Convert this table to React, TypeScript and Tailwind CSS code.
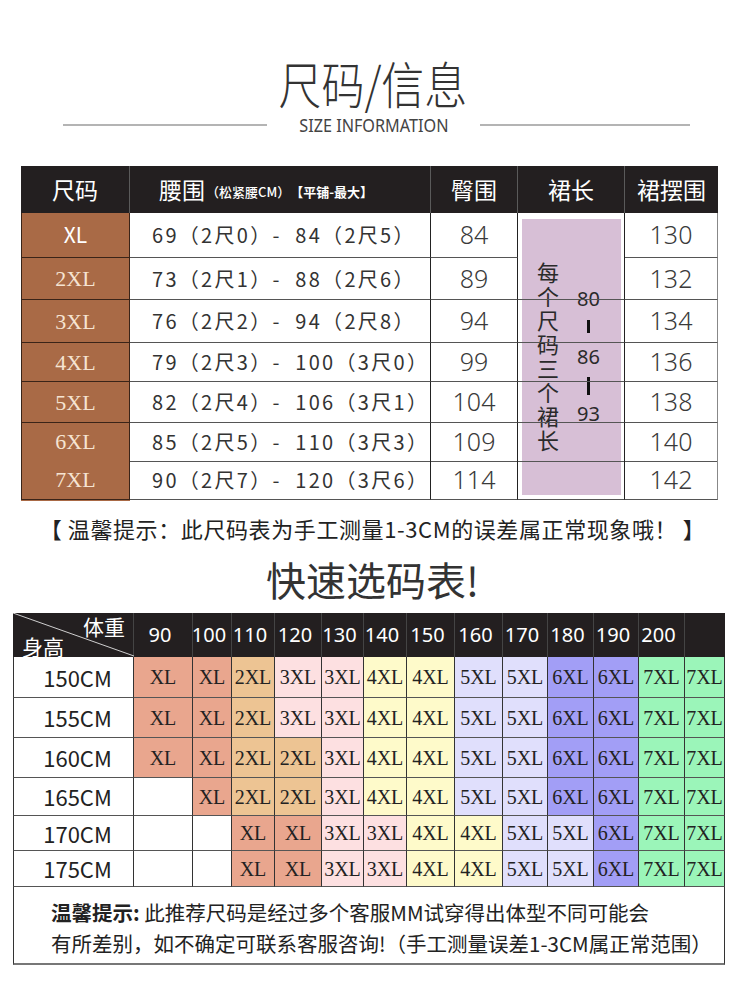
import React from "react";

const cjk = "font-['Noto_Sans_CJK_SC','Noto_Sans',sans-serif]";
const serif = "font-['Liberation_Serif','DejaVu_Serif',serif]";
const latin = "font-['Noto_Sans','Noto_Sans_CJK_SC',sans-serif]";

const t1 = [
  { size: "XL", w: "69（2尺0）-  84（2尺5）", hip: "84", hem: "130", h: "h-[45px]" },
  { size: "2XL", w: "73（2尺1）-  88（2尺6）", hip: "89", hem: "132", h: "h-[42px]" },
  { size: "3XL", w: "76（2尺2）-  94（2尺8）", hip: "94", hem: "134", h: "h-[43px]" },
  { size: "4XL", w: "79（2尺3）-  100（3尺0）", hip: "99", hem: "136", h: "h-[39px]" },
  { size: "5XL", w: "82（2尺4）-  106（3尺1）", hip: "104", hem: "138", h: "h-[41px]" },
  { size: "6XL", w: "85（2尺5）-  110（3尺3）", hip: "109", hem: "140", h: "h-[38px]" },
  { size: "7XL", w: "90（2尺7）-  120（3尺6）", hip: "114", hem: "142", h: "h-[37px]" },
];

const sizeBg: Record<string, string> = {
  XL: "bg-[#e9a68e]",
  "2XL": "bg-[#edc493]",
  "3XL": "bg-[#fde0e1]",
  "4XL": "bg-[#fefaca]",
  "5XL": "bg-[#e0dffc]",
  "6XL": "bg-[#a29ef6]",
  "7XL": "bg-[#9bf5b9]",
  "": "bg-white",
};

const weights = ["90", "100", "110", "120", "130", "140", "150", "160", "170", "180", "190", "200", ""];

const t2 = [
  { h: "150CM", cls: "h-[41px]", cells: ["XL", "XL", "2XL", "3XL", "3XL", "4XL", "4XL", "5XL", "5XL", "6XL", "6XL", "7XL", "7XL"] },
  { h: "155CM", cls: "h-[40px]", cells: ["XL", "XL", "2XL", "3XL", "3XL", "4XL", "4XL", "5XL", "5XL", "6XL", "6XL", "7XL", "7XL"] },
  { h: "160CM", cls: "h-[40px]", cells: ["XL", "XL", "2XL", "2XL", "3XL", "4XL", "4XL", "5XL", "5XL", "6XL", "6XL", "7XL", "7XL"] },
  { h: "165CM", cls: "h-[38px]", cells: ["", "XL", "2XL", "2XL", "3XL", "4XL", "4XL", "5XL", "5XL", "6XL", "6XL", "7XL", "7XL"] },
  { h: "170CM", cls: "h-[35px]", cells: ["", "", "XL", "XL", "3XL", "3XL", "4XL", "4XL", "5XL", "5XL", "6XL", "7XL", "7XL"] },
  { h: "175CM", cls: "h-[36px]", cells: ["", "", "XL", "XL", "3XL", "3XL", "4XL", "4XL", "5XL", "5XL", "6XL", "7XL", "7XL"] },
];

const grid1 = "grid grid-cols-[109px_301px_87px_107px_93px]";
const grid2 = "grid grid-cols-[121px_59px_39px_43px_47px_42px_43px_48px_48px_45px_46px_45px_46px_40px]";

function SizeTable() {
  return (
    <div className="ml-[21px] w-[697px] mt-[31px]">
      <div className={`${grid1} h-[47px] bg-[#231f20] text-white ${cjk}`}>
        <div className="flex items-center justify-center text-[23px] border-r border-[#5a5a5a]">尺码</div>
        <div className="flex items-center pl-[29px] border-r border-[#5a5a5a]">
          <span className="text-[23px]">腰围</span>
          <span className="text-[13px] font-medium ml-[1px] mt-[5px]">（松紧腰CM）</span>
          <span className="text-[13px] font-bold mt-[5px]">【平铺-最大】</span>
        </div>
        <div className="flex items-center justify-center text-[23px] border-r border-[#5a5a5a]">臀围</div>
        <div className="flex items-center justify-center text-[23px] border-r border-[#5a5a5a]">裙长</div>
        <div className="flex items-center justify-center text-[23px]">裙摆围</div>
      </div>
      <div className="relative">
        <div className={`absolute left-[501px] top-[6px] w-[99px] h-[276px] bg-[#d7bfd6] text-[#2a2a2a] ${cjk}`}>
          <div className="absolute left-[15px] top-[40px] w-[22px] flex flex-col text-[22px] leading-[24px]">
            {"每个尺码三个裙长".split("").map((c, i) => (
              <span key={i} className="h-[24px]">{c}</span>
            ))}
          </div>
          <div className={`absolute left-[55px] top-[70px] text-[20px] leading-[20px] ${latin}`}>80</div>
          <div className="absolute left-[65px] top-[101px] w-[3px] h-[13px] bg-[#111]" />
          <div className={`absolute left-[55px] top-[128px] text-[20px] leading-[20px] ${latin}`}>86</div>
          <div className="absolute left-[65px] top-[158px] w-[3px] h-[18px] bg-[#111]" />
          <div className={`absolute left-[55px] top-[185px] text-[20px] leading-[20px] ${latin}`}>93</div>
        </div>
        {t1.map((r, i) => (
          <div key={i} className={`relative ${grid1} ${r.h}`}>
            <div className="flex items-center justify-center bg-[#a96a46] border-l border-r border-b border-[#3a2418]">
              {i === 0 ? (
                <span className={`${cjk} text-[21px] text-white`}>XL</span>
              ) : (
                <span className={`${serif} text-[22px] text-[#f6e4d2]`}>{r.size}</span>
              )}
            </div>
            <div className={`flex items-center pl-[22px] whitespace-pre tracking-[2.3px] border-r border-b border-r-[#222] border-b-[#555] text-[20px] text-[#333] ${cjk}`}>
              {r.w}
            </div>
            <div className={`flex items-center justify-center border-r border-b border-r-[#222] border-b-[#555] text-[25px] font-light text-[#3a3a3a] ${latin}`}>
              {r.hip}
            </div>
            <div className={i === 0 ? "border-r border-[#222]" : "border-r border-b border-r-[#222] border-b-[#555]"} />
            <div className={`flex items-center justify-center border-r border-b border-r-[#888] border-b-[#555] text-[25px] font-light text-[#3a3a3a] ${latin}`}>
              {r.hem}
            </div>
          </div>
        ))}
      </div>
      <div className="w-[109px] h-[3px] bg-[#a96a46]" />
    </div>
  );
}

function QuickTable() {
  return (
    <div className="ml-[13px] w-[712px] mt-[9px]">
      <div className={`${grid2} h-[44px] bg-[#231f20] text-white`}>
        <div className="relative border-r border-[#444]">
          <svg className="absolute inset-0" width="121" height="44" viewBox="0 0 121 44">
            <line x1="0" y1="0" x2="121" y2="43" stroke="#cfcfcf" strokeWidth="1" />
          </svg>
          <span className={`absolute left-[70px] top-[1px] text-[21px] leading-[24px] ${cjk}`}>体重</span>
          <span className={`absolute left-[9px] top-[21px] text-[21px] leading-[24px] ${cjk}`}>身高</span>
        </div>
        {weights.map((w, i) => (
          <div
            key={i}
            className={`flex items-center justify-center pr-[6px] text-[20px] ${latin} ${i === weights.length - 1 ? "" : "border-r border-[#444]"}`}
          >
            {w}
          </div>
        ))}
      </div>
      {t2.map((r, ri) => (
        <div key={ri} className={`${grid2} ${r.cls}`}>
          <div className={`flex items-center justify-center pl-[8px] bg-white border-l border-r border-b border-l-[#333] border-r-[#333] border-b-[#555] text-[22px] text-[#222] ${cjk}`}>
            {r.h}
          </div>
          {r.cells.map((c, ci) => (
            <div
              key={ci}
              className={`flex items-center justify-center border-r border-b border-r-[#333] border-b-[#555] ${sizeBg[c]} ${serif} text-[20px] text-[#222]`}
            >
              {c}
            </div>
          ))}
        </div>
      ))}
      <div className={`h-[78px] pt-[10px] pl-[37px] border-l border-r border-b-2 border-l-[#333] border-r-[#333] border-b-[#777] text-[20.5px] leading-[31px] text-[#222] ${cjk}`}>
        <div>
          <span className="font-bold">温馨提示:</span> 此推荐尺码是经过多个客服MM试穿得出体型不同可能会
        </div>
        <div>有所差别，如不确定可联系客服咨询!（手工测量误差1-3CM属正常范围）</div>
      </div>
    </div>
  );
}

export default function App() {
  return (
    <div className="w-[745px] min-h-[994px] bg-white text-[#333]">
      <div className="pt-[52px] text-center">
        <div className={`h-[60px] leading-[60px] text-[50px] font-light text-[#333] ${cjk}`}>
          <span className="inline-block scale-x-[0.86]">尺码/信息</span>
        </div>
      </div>
      <div className="flex items-center h-[20px] mt-[3px]">
        <div className="ml-[63px] w-[204px] h-[2px] bg-[#b4b4b4]" />
        <div className={`w-[213px] flex justify-center text-[18px] leading-[20px] text-[#444] ${latin}`}>
          <span className="inline-block scale-x-[0.9]">SIZE INFORMATION</span>
        </div>
        <div className="w-[210px] h-[2px] bg-[#b4b4b4]" />
      </div>
      <SizeTable />
      <div className={`mt-[12px] h-[30px] flex items-center justify-center whitespace-pre tracking-[0.6px] text-[22px] text-[#222] ${cjk}`}>
        【 温馨提示：此尺码表为手工测量1-3CM的误差属正常现象哦！ 】
      </div>
      <div className={`mt-[11px] h-[50px] leading-[50px] text-center text-[40px] text-[#333] ${cjk}`}>快速选码表!</div>
      <QuickTable />
    </div>
  );
}
